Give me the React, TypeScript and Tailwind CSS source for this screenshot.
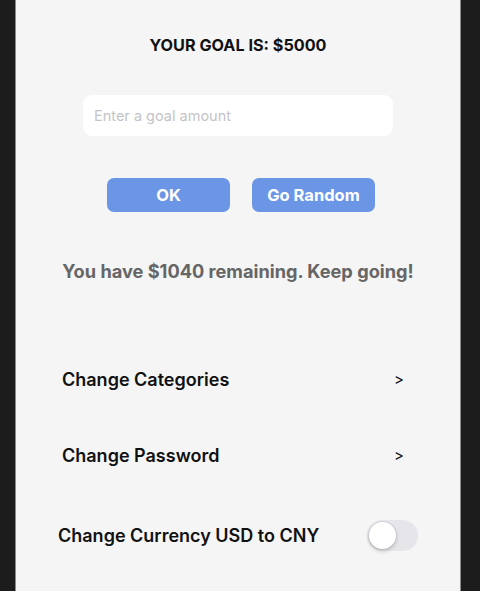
import React from "react";

export default function App() {
  return (
    <div className="flex h-[591px] w-[480px] bg-[#1c1c1c]" style={{ fontFamily: "Inter, 'Noto Sans', sans-serif" }}>
      <div className="ml-[15px] flex h-full w-[446px] flex-col border-x border-[#8a8a8a] bg-[#f5f5f5]">
        <div className="pt-[35px] text-center text-[16.2px] font-bold leading-[20px] text-[#111]">YOUR GOAL IS: $5000</div>
        <div className="mt-[40px] flex justify-center">
          <div className="flex h-[41px] w-[310px] items-center rounded-[9px] bg-white px-[11px] text-[14.5px] text-[#c4c4c8]">
            Enter a goal amount
          </div>
        </div>
        <div className="mt-[42px] flex justify-center gap-[22px] pl-[6px]">
          <div className="flex h-[34px] w-[123px] items-center justify-center rounded-[7px] bg-[#6b96e6] text-[16.5px] font-bold text-white">OK</div>
          <div className="flex h-[34px] w-[123px] items-center justify-center rounded-[7px] bg-[#6b96e6] text-[16.5px] font-bold text-white">Go Random</div>
        </div>
        <div className="mt-[48px] text-center text-[18.2px] font-bold leading-[22px] text-[#666]">
          You have $1040 remaining. Keep going!
        </div>
        <div className="mt-[87px] flex items-center justify-between pl-[46px] pr-[56px] text-[18px] font-semibold leading-[22px] text-[#111]">
          <span>Change Categories</span>
          <span className="text-[15px] font-normal">&gt;</span>
        </div>
        <div className="mt-[54px] flex items-center justify-between pl-[46px] pr-[56px] text-[18px] font-semibold leading-[22px] text-[#111]">
          <span>Change Password</span>
          <span className="text-[15px] font-normal">&gt;</span>
        </div>
        <div className="mt-[53px] flex items-center justify-between pl-[42px] pr-[42px] text-[18px] font-semibold text-[#111]">
          <span>Change Currency USD to CNY</span>
          <div className="relative h-[31px] w-[51px] rounded-full bg-[#e5e5ea]">
            <div className="absolute left-[2px] top-[2px] h-[27px] w-[27px] rounded-full bg-white shadow-[0_2px_4px_rgba(0,0,0,0.2)] ring-1 ring-black/5" />
          </div>
        </div>
      </div>
    </div>
  );
}
